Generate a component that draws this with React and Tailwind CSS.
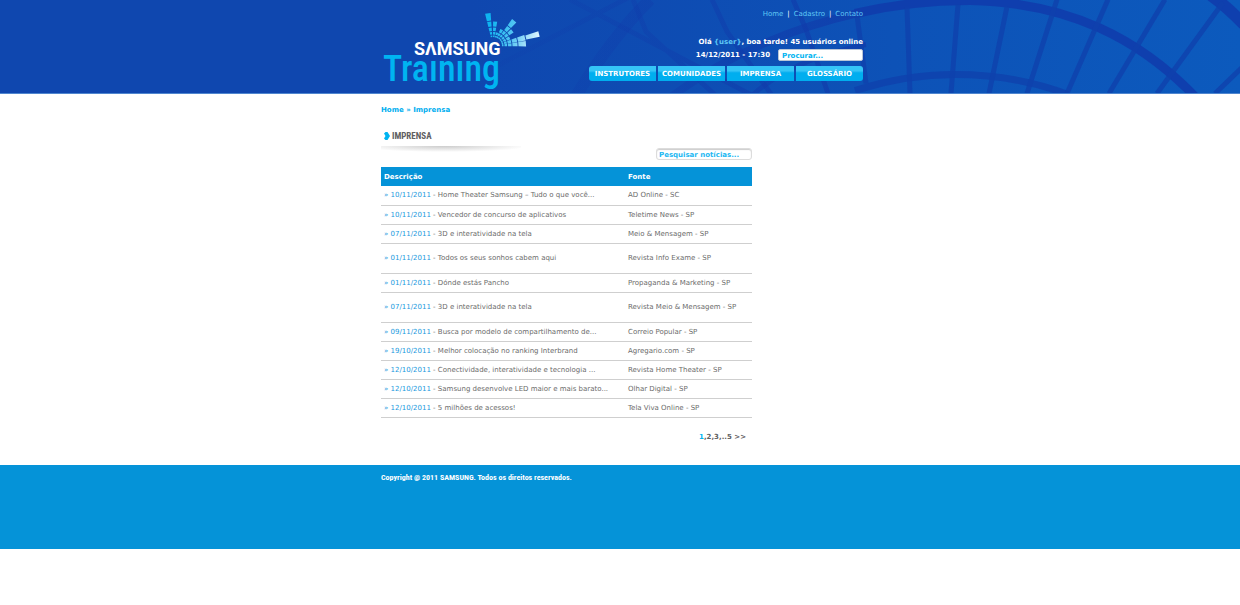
const news = [
  { date: "10/11/2011", title: "Home Theater Samsung – Tudo o que você...", source: "AD Online - SC" },
  { date: "10/11/2011", title: "Vencedor de concurso de aplicativos", source: "Teletime News - SP" },
  { date: "07/11/2011", title: "3D e interatividade na tela", source: "Meio & Mensagem - SP" },
  { date: "01/11/2011", title: "Todos os seus sonhos cabem aqui", source: "Revista Info Exame - SP", tall: true },
  { date: "01/11/2011", title: "Dónde estás Pancho", source: "Propaganda & Marketing - SP" },
  { date: "07/11/2011", title: "3D e interatividade na tela", source: "Revista Meio & Mensagem - SP", tall: true },
  { date: "09/11/2011", title: "Busca por modelo de compartilhamento de...", source: "Correio Popular - SP" },
  { date: "19/10/2011", title: "Melhor colocação no ranking Interbrand", source: "Agregario.com - SP" },
  { date: "12/10/2011", title: "Conectividade, interatividade e tecnologia ...", source: "Revista Home Theater - SP" },
  { date: "12/10/2011", title: "Samsung desenvolve LED maior e mais barato...", source: "Olhar Digital - SP" },
  { date: "12/10/2011", title: "5 milhões de acessos!", source: "Tela Viva Online - SP" },
];

const sections = ["INSTRUTORES", "COMUNIDADES", "IMPRENSA", "GLOSSÁRIO"];

// Fan of the logo: each ray is a stack of cells between two rings.
const rings = [9, 11.5, 15, 19.5, 25.5, 34, 48.5];
const rays = [
  { angle: 99, cells: 5 },
  { angle: 85, cells: 4 },
  { angle: 73, cells: 2 },
  { angle: 62, cells: 3 },
  { angle: 50, cells: 5 },
  { angle: 38, cells: 4 },
  { angle: 26, cells: 3 },
  { angle: 14.5, cells: 6 },
  { angle: 4, cells: 5 },
];

function polar(radius, degrees) {
  const a = (degrees * Math.PI) / 180;
  return `${(493 + radius * Math.cos(a)).toFixed(2)} ${(46 - radius * Math.sin(a)).toFixed(2)}`;
}

const fan = rays
  .flatMap(({ angle, cells }) =>
    Array.from({ length: cells }, (_, i) => {
      const inner = rings[i];
      const outer = rings[i + 1] - 0.9;
      const half = i === 5 ? 3.4 : 4.8;
      return `M${polar(inner, angle - half)} L${polar(outer, angle - half)} L${polar(outer, angle + half)} L${polar(inner, angle + half)} Z`;
    }),
  )
  .join(" ");

function HeaderArt() {
  return (
    <svg
      className="absolute inset-0 h-full w-full"
      viewBox="0 0 1240 94"
      preserveAspectRatio="xMidYMid slice"
      aria-hidden="true"
    >
      <defs>
        <linearGradient id="sky" x1="0" x2="1" y1="0" y2="0">
          <stop offset="0.38" stopColor="#0f47af" />
          <stop offset="0.72" stopColor="#0d52b7" />
          <stop offset="1" stopColor="#0c5abd" />
        </linearGradient>
        <linearGradient id="lines" gradientUnits="userSpaceOnUse" x1="520" x2="900" y1="0" y2="0">
          <stop offset="0" stopColor="#103bab" stopOpacity="0.15" />
          <stop offset="1" stopColor="#103bab" stopOpacity="0.8" />
        </linearGradient>
      </defs>
      <rect width="1240" height="94" fill="url(#sky)" />
      <g fill="none" stroke="url(#lines)">
        <path d="M560 125 Q600 50 650 0" strokeWidth="12" />
        <path d="M655 110 Q740 40 860 13" strokeWidth="8" />
        <path d="M490 70 L640 -8 M570 0 L760 100 M633 0 L646 32 L720 100 M712 0 L727 32 L772 96 M793 0 L806 30 L828 94" strokeWidth="5" />
        <path d="M750 98 Q790 60 866 45" strokeWidth="5" />
      </g>
      <g fill="none" stroke="#103bab" strokeOpacity="0.85">
        <path d="M855 14 Q910 1 970 1 C1070 3 1140 40 1195 97" strokeWidth="9" />
        <path d="M1210 -5 Q1228 8 1244 25" strokeWidth="12" />
      </g>
      <g fill="none" stroke="#0f41ad" strokeOpacity="0.8">
        <path d="M855 91 Q905 75 955 75 Q1015 75 1068 95" strokeWidth="7" />
        <path
          d="M857 16 L866 84 M907 8 L910 94 M958 5 L951 94 M1007 7 L989 94 M1057 0 L1027 94 M1108 0 L1067 94 M1165 0 L1109 94 M1223 3 L1157 94 M1242 68 L1215 94"
          strokeWidth="5"
        />
      </g>
    </svg>
  );
}

function Logo() {
  return (
    <svg width="162" height="84" viewBox="380 8 162 84" role="img" aria-label="Samsung Training">
      <defs>
        <linearGradient id="rays" gradientUnits="userSpaceOnUse" x1="490" x2="540" y1="24" y2="36">
          <stop offset="0" stopColor="#0fb4f0" />
          <stop offset="0.45" stopColor="#4fc4f2" />
          <stop offset="1" stopColor="#e4f7ff" />
        </linearGradient>
      </defs>
      <path d={fan} fill="url(#rays)" />
      <text x="414" y="55" fill="#ffffff" className="font-[Roboto,sans-serif] text-[18px] font-bold">
        SΛMSUNG
      </text>
      <text x="383" y="81" fill="#00b4f1" className="font-['Roboto_Condensed',Roboto,sans-serif] text-[36px] font-medium">
        Traınıng
      </text>
    </svg>
  );
}

function Header() {
  return (
    <header className="relative h-[94px] border-b border-[#4f86cf] bg-[#0f47af]">
      <HeaderArt />
      <div className="relative mx-auto flex w-[486px] justify-between pl-1">
        <a href="#" className="-ml-px block pt-2">
          <Logo />
        </a>
        <div className="flex flex-col items-end text-white">
          <nav aria-label="Conta" className="flex gap-1 pt-[9px] text-[7px] leading-[10px]">
            <a href="#" className="text-[#5fc8f5]">Home</a>
            <span>|</span>
            <a href="#" className="text-[#5fc8f5]">Cadastro</a>
            <span>|</span>
            <a href="#" className="text-[#5fc8f5]">Contato</a>
          </nav>
          <p className="mt-[18px] text-[7px] leading-[10px] font-bold">
            Olá <span className="text-[#5fc8f5]">{"{user}"}</span>, boa tarde! 45 usuários online
          </p>
          <form className="mt-[2px] flex items-center gap-2" onSubmit={(e) => e.preventDefault()}>
            <time className="text-[7px] leading-[10px] font-bold">14/12/2011 - 17:30</time>
            <input
              type="search"
              aria-label="Procurar"
              placeholder="Procurar..."
              className="h-3 w-[85px] rounded-[2px] border border-[#b9c6d6] bg-white px-[3px] pt-[2px] text-[7px] font-bold text-[#00b4f1] outline-none placeholder:text-[#00b4f1] placeholder:opacity-100"
            />
          </form>
          <nav aria-label="Seções" className="mt-[5px] grid grid-cols-4 gap-[2px] overflow-hidden rounded-[3px]">
            {sections.map((s) => (
              <a
                key={s}
                href="#"
                className="flex h-[15px] w-[67px] items-center justify-center bg-linear-to-b from-[#35c5f7] from-30% to-[#00aeef] to-45% pt-px text-[7px] font-bold"
              >
                {s}
              </a>
            ))}
          </nav>
        </div>
      </div>
    </header>
  );
}

function NewsTable() {
  return (
    <table className="w-full table-fixed border-collapse text-left text-[7px] leading-[10px] text-[#6b6b6b]">
      <thead>
        <tr className="h-[19px] bg-[#0593d8] text-white">
          <th className="w-[244px] px-[3px] py-0">Descrição</th>
          <th className="px-[3px] py-0">Fonte</th>
        </tr>
      </thead>
      <tbody>
        {news.map((n, i) => (
          <tr key={i} className={n.tall ? "h-[30px] border-b border-[#cfcfcf]" : "h-[19px] border-b border-[#cfcfcf]"}>
            <td className="px-[3px] py-0 whitespace-nowrap">
              <a href="#">
                <span className="text-[#1a9ade]">» {n.date}</span> - {n.title}
              </a>
            </td>
            <td className="px-[3px] py-0 whitespace-nowrap">{n.source}</td>
          </tr>
        ))}
      </tbody>
    </table>
  );
}

export default function App() {
  return (
    <div className="bg-white font-[Verdana,'DejaVu_Sans',sans-serif]">
      <Header />
      <main className="mx-auto w-[486px] pl-1">
        <div className="w-[371px]">
          <nav aria-label="Trilha" className="pt-[11px] text-[7px] leading-[10px] font-bold text-[#00aeef]">
            <a href="#">Home</a> » <a href="#">Imprensa</a>
          </nav>
          <div className="mt-[15px] flex items-center gap-[2px] pl-[3px]">
            <svg width="6" height="8" viewBox="0 0 6 8" aria-hidden="true">
              <path d="M0 1.500 L1.500 0 H3.500 L6 4 L3.500 8 H1.500 L0 6.500 L1.500 4 Z" fill="#00b4f1" />
            </svg>
            <h1 className="font-['Roboto_Condensed',Roboto,sans-serif] text-[9px] leading-3 font-bold text-[#5f6062]">
              IMPRENSA
            </h1>
          </div>
          <div className="mt-1 h-[6px] w-[140px] bg-[radial-gradient(ellipse_60%_100%_at_45%_0%,#cccccc,#ffffff)]" />
          <div className="-mt-1 flex justify-end">
            <input
              type="search"
              aria-label="Pesquisar notícias"
              placeholder="Pesquisar notícias..."
              className="h-3 w-24 rounded-[3px] border border-[#dcdcdc] bg-white px-[2px] pt-[2px] text-[7px] font-bold shadow-[inset_0_1px_1px_#cccccc] outline-none placeholder:text-[#22b8f2] placeholder:opacity-100"
            />
          </div>
          <div className="pt-[7px]">
            <NewsTable />
          </div>
          <nav aria-label="Páginas" className="pt-[14px] pr-[6px] pb-[23px] text-right text-[7px] leading-[10px] font-bold text-[#5f6062]">
            <a href="#" className="text-[#00b4f1]">1</a>,<a href="#">2</a>,<a href="#">3</a>,..<a href="#">5</a> <a href="#">&gt;&gt;</a>
          </nav>
        </div>
      </main>
      <footer className="h-[84px] bg-[#0593d8]">
        <div className="mx-auto w-[486px] pt-2 pl-1 font-['Roboto_Condensed',Roboto,sans-serif] text-[8px] leading-[10px] font-bold text-white">
          Copyright @ 2011 SAMSUNG. Todos os direitos reservados.
        </div>
      </footer>
    </div>
  );
}
